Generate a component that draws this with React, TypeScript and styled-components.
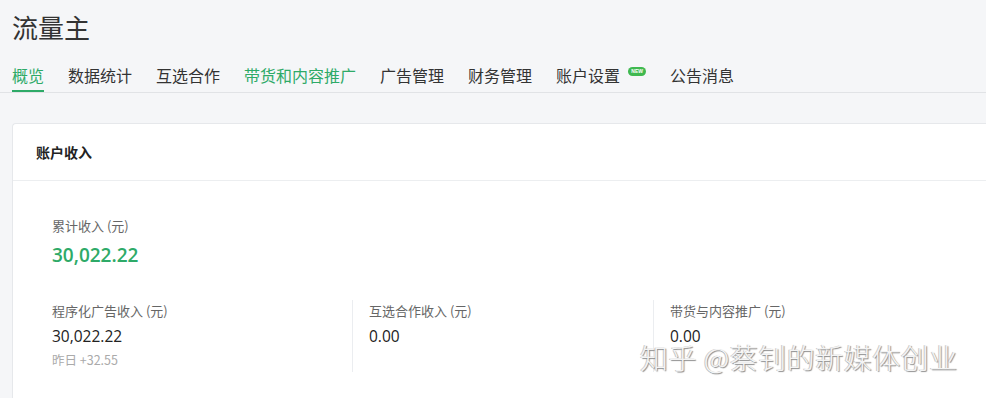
import React from 'react';
import styled, { createGlobalStyle } from 'styled-components';

const GREEN = '#2eaa68';

const GlobalStyle = createGlobalStyle`
  html, body {
    margin: 0;
    padding: 0;
    background: #f5f6f8;
    font-family: "Noto Sans CJK SC", "Open Sans", sans-serif;
    overflow: hidden;
  }
`;

const Page = styled.div`
  position: relative;
  width: 986px;
  height: 398px;
  padding: 12px 0 0 12px;
  box-sizing: border-box;
  overflow: hidden;
`;

const Title = styled.h1`
  margin: 0;
  font-size: 26px;
  line-height: 30px;
  font-weight: 400;
  color: #333;
`;

const Tabs = styled.nav`
  display: flex;
  align-items: flex-end;
  margin: 21px 0 0 -12px;
  padding-left: 12px;
  border-bottom: 1px solid #e1e3e6;
  height: 29px;
`;

const Tab = styled.div<{ $active?: boolean; $green?: boolean }>`
  position: relative;
  display: flex;
  align-items: flex-start;
  height: 28px;
  margin-right: 24px;
  font-size: 16px;
  line-height: 22px;
  color: ${({ $active, $green }) => ($active || $green ? GREEN : '#333')};
  border-bottom: 2px solid ${({ $active }) => ($active ? GREEN : 'transparent')};
  box-sizing: border-box;
  white-space: nowrap;
`;

const NewBadge = styled.span`
  display: inline-flex;
  align-items: center;
  justify-content: center;
  width: 18px;
  height: 9px;
  margin: 3px 0 0 8px;
  border-radius: 5px;
  background: #3fb950;
  color: #fff;
  font-family: "Liberation Sans", sans-serif;
  font-size: 5px;
  font-weight: 700;
  line-height: 9px;
`;

const Card = styled.section`
  margin-top: 30px;
  background: #fff;
  border: 1px solid #e6e8eb;
  border-right: none;
  border-radius: 4px 0 0 4px;
  height: 290px;
`;

const CardHeader = styled.div`
  height: 56px;
  display: flex;
  align-items: center;
  padding-left: 23px;
  border-bottom: 1px solid #eceef0;
  font-size: 14px;
  font-weight: 700;
  color: #222;
`;

const CardBody = styled.div`
  padding: 36px 0 0 39px;
`;

const Label = styled.div`
  font-size: 13px;
  line-height: 18px;
  color: #666;
`;

const TotalValue = styled.div`
  margin-top: 7px;
  font-family: "Open Sans", sans-serif;
  font-size: 19px;
  line-height: 26px;
  font-weight: 600;
  color: ${GREEN};
`;

const Columns = styled.div`
  display: grid;
  grid-template-columns: 300px 301px 1fr;
  margin-top: 32px;
`;

const Column = styled.div<{ $divider?: boolean }>`
  height: 70px;
  padding-top: 2px;
  padding-left: ${({ $divider }) => ($divider ? '16px' : '0')};
  border-left: ${({ $divider }) => ($divider ? '1px solid #ebedf0' : 'none')};
`;

const Value = styled.div`
  margin-top: 5px;
  font-family: "Open Sans", sans-serif;
  font-size: 15.5px;
  line-height: 22px;
  font-weight: 500;
  color: #222;
`;

const Delta = styled.div`
  margin-top: 4px;
  font-size: 12.5px;
  line-height: 18px;
  color: #aaa;
`;

const Watermark = styled.div`
  position: absolute;
  left: 640px;
  top: 340px;
  font-size: 28px;
  line-height: 34px;
  font-weight: 300;
  letter-spacing: 0.5px;
  color: #f4f4f4;
  text-shadow: 1px 1px 1px #8a8a8a, -1px 0 0 #c8c8c8;
  white-space: nowrap;
`;

const tabs = ['概览', '数据统计', '互选合作', '带货和内容推广', '广告管理', '财务管理', '账户设置', '公告消息'];

const App: React.FC = () => {
  return (
    <Page>
      <GlobalStyle />
      <Title>流量主</Title>
      <Tabs>
        {tabs.map((t, i) => (
          <Tab key={t} $active={i === 0} $green={t === '带货和内容推广'}>
            {t}
            {t === '账户设置' && <NewBadge>NEW</NewBadge>}
          </Tab>
        ))}
      </Tabs>
      <Card>
        <CardHeader>账户收入</CardHeader>
        <CardBody>
          <Label>累计收入 (元)</Label>
          <TotalValue>30,022.22</TotalValue>
          <Columns>
            <Column>
              <Label>程序化广告收入 (元)</Label>
              <Value>30,022.22</Value>
              <Delta>昨日 +32.55</Delta>
            </Column>
            <Column $divider>
              <Label>互选合作收入 (元)</Label>
              <Value>0.00</Value>
            </Column>
            <Column $divider>
              <Label>带货与内容推广 (元)</Label>
              <Value>0.00</Value>
            </Column>
          </Columns>
        </CardBody>
      </Card>
      <Watermark>知乎 @蔡钊的新媒体创业</Watermark>
    </Page>
  );
};

export default App;
